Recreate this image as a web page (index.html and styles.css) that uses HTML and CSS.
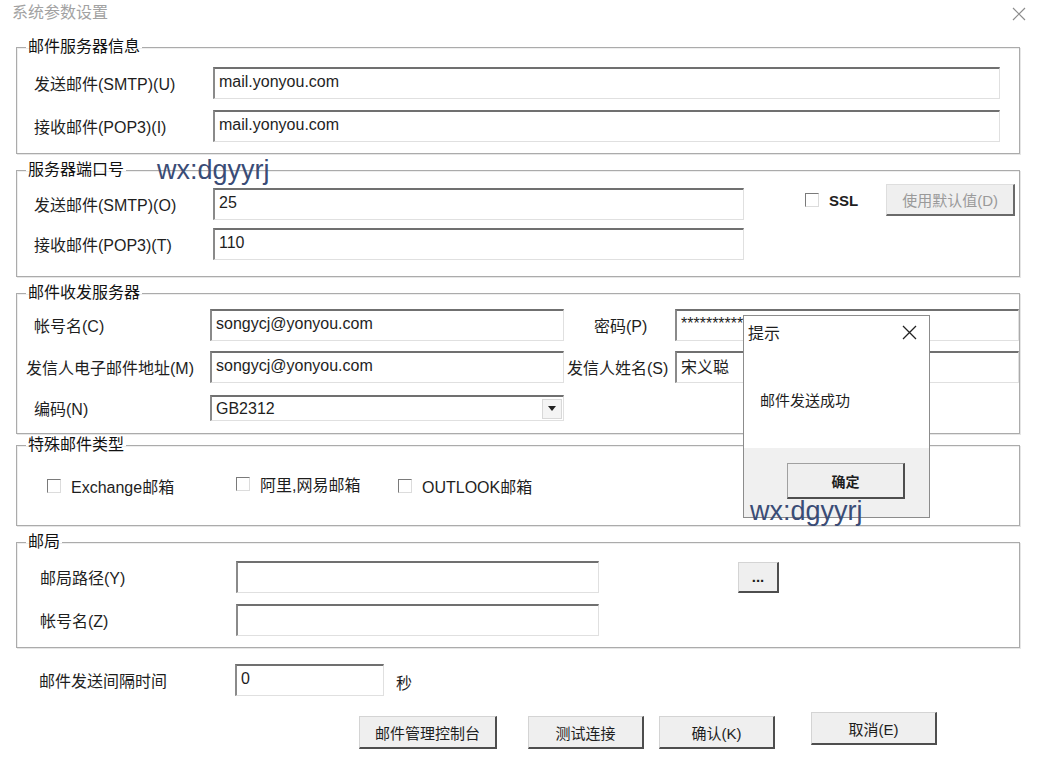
FILE: index.html
```html
<!DOCTYPE html>
<html lang="zh-CN">
<head>
  <meta charset="UTF-8">
  <title>系统参数设置</title>
  <link rel="stylesheet" href="styles.css">
</head>
<body>
<div class="dialog">

  <header class="titlebar">
    <span class="title">系统参数设置</span>
    <svg class="close" width="14" height="14" viewBox="0 0 14 14"><path d="M1 1L13 13M13 1L1 13" stroke="#8c8c8c" stroke-width="1.2" fill="none"/></svg>
  </header>

  <main class="content">

    <fieldset class="group group-server">
      <legend>邮件服务器信息</legend>
      <div class="row">
        <label class="lbl">发送邮件(SMTP)(U)</label>
        <input class="field field-full" type="text" value="mail.yonyou.com">
      </div>
      <div class="row">
        <label class="lbl">接收邮件(POP3)(I)</label>
        <input class="field field-full" type="text" value="mail.yonyou.com">
      </div>
    </fieldset>

    <fieldset class="group group-port">
      <legend>服务器端口号</legend>
      <div class="row">
        <label class="lbl">发送邮件(SMTP)(O)</label>
        <input class="field field-port" type="text" value="25">
        <span class="check check-ssl"><span class="box"></span><b>SSL</b></span>
        <button class="btn btn-default" disabled>使用默认值(D)</button>
      </div>
      <div class="row">
        <label class="lbl">接收邮件(POP3)(T)</label>
        <input class="field field-port" type="text" value="110">
      </div>
    </fieldset>

    <fieldset class="group group-account">
      <legend>邮件收发服务器</legend>
      <div class="row">
        <label class="lbl lbl-acc">帐号名(C)</label>
        <input class="field field-mid" type="text" value="songycj@yonyou.com">
        <label class="lbl-side lbl-pwd">密码(P)</label>
        <input class="field field-side" type="text" value="**********">
      </div>
      <div class="row">
        <label class="lbl lbl-acc lbl-wide">发信人电子邮件地址(M)</label>
        <input class="field field-mid" type="text" value="songycj@yonyou.com">
        <label class="lbl-side">发信人姓名(S)</label>
        <input class="field field-side" type="text" value="宋义聪">
      </div>
      <div class="row row-select">
        <label class="lbl lbl-acc">编码(N)</label>
        <div class="field field-mid select">
          <span>GB2312</span>
          <span class="select-btn"><i></i></span>
        </div>
      </div>
    </fieldset>

    <fieldset class="group group-type">
      <legend>特殊邮件类型</legend>
      <div class="row row-checks">
        <span class="check check-ex"><span class="box"></span>Exchange邮箱</span>
        <span class="check check-ali"><span class="box"></span>阿里,网易邮箱</span>
        <span class="check"><span class="box"></span>OUTLOOK邮箱</span>
      </div>
    </fieldset>

    <fieldset class="group group-post">
      <legend>邮局</legend>
      <div class="row">
        <label class="lbl lbl-post">邮局路径(Y)</label>
        <input class="field field-post" type="text">
        <button class="btn btn-browse">...</button>
      </div>
      <div class="row">
        <label class="lbl lbl-post">帐号名(Z)</label>
        <input class="field field-post" type="text">
      </div>
    </fieldset>

    <div class="row row-interval">
      <label class="lbl lbl-post">邮件发送间隔时间</label>
      <input class="field field-interval" type="text" value="0">
      <span class="unit">秒</span>
    </div>

    <div class="actions">
      <button class="btn btn-console">邮件管理控制台</button>
      <button class="btn btn-test">测试连接</button>
      <button class="btn btn-ok">确认(K)</button>
      <button class="btn btn-cancel">取消(E)</button>
    </div>

  </main>

  <!-- message box shown after a test send -->
  <div class="msgbox">
    <div class="msgbox-title">
      <span>提示</span>
      <svg width="15" height="15" viewBox="0 0 15 15"><path d="M1 1L14 14M14 1L1 14" stroke="#222" stroke-width="1.3" fill="none"/></svg>
    </div>
    <div class="msgbox-text">邮件发送成功</div>
    <div class="msgbox-foot">
      <button class="btn btn-confirm">确定</button>
    </div>
  </div>

  <span class="mark mark-top">wx:dgyyrj</span>
  <span class="mark mark-box">wx:dgyyrj</span>

</div>
</body>
</html>
```

FILE: styles.css
```css
body {
  margin: 0;
  background: #fff;
}
.dialog {
  position: relative;
  width: 1037px;
  height: 757px;
  overflow: hidden;
  background: #fff;
  color: #1e1e1e;
  font: 16px "Liberation Sans", "Noto Sans CJK SC", sans-serif;
}

/* title bar */
.titlebar {
  height: 37px;
  display: flex;
  justify-content: space-between;
  align-items: flex-start;
  padding: 0 12px;
}
.title {
  color: #a2a2a2;
  line-height: 26px;
}
.close {
  margin-top: 7px;
  margin-right: -1px;
}

.content {
  padding: 0 17px 0 16px;
}

/* group boxes */
.group {
  margin: 0;
  padding: 0;
  border: 1px solid #ababab;
  box-shadow: 1px 1px 0 #e6e6e6, inset 1px 1px 0 #eeeeee;
  min-width: 0;
}
.group legend {
  margin-left: 9px;
  padding: 0 2px;
  line-height: 20px;
  color: #111;
}
.group-server { padding: 10px 0 11px; }
.group-port { margin-top: 6px; padding: 8px 0 16px; }
.group-account { margin-top: 6px; padding: 6px 0 12px; }
.group-type { margin-top: 1px; padding: 21px 0 29px; }
.group-post { margin-top: 6px; padding: 9px 0 11px; }

.row {
  display: flex;
  align-items: center;
  padding-left: 17px;
}
.row + .row {
  margin-top: 11px;
}
.group-port .row + .row { margin-top: 8px; }
.group-account .row + .row { margin-top: 10px; }
.group-account .row + .row-select { margin-top: 12px; }

.lbl {
  width: 179px;
  flex: none;
  white-space: nowrap;
}
.lbl-acc { width: 176px; }
.lbl-wide { margin-left: -8px; width: 184px; }
.lbl-post { width: 196px; margin-left: 6px; }
.lbl-side {
  width: 111px;
  flex: none;
  box-sizing: border-box;
  padding-left: 3px;
  white-space: nowrap;
}
.lbl-pwd { padding-left: 30px; }

/* text boxes */
.field {
  box-sizing: border-box;
  height: 32px;
  flex: none;
  margin: 0;
  padding: 0 4px 3px;
  border-style: solid;
  border-width: 2px 1px 1px 2px;
  border-color: #707070 #e0e0e0 #e0e0e0 #8a8a8a;
  background: #fff;
  color: #1e1e1e;
  font: inherit;
  outline: none;
}
.field-full { width: 787px; }
.field-port { width: 531px; }
.field-mid { width: 354px; }
.field-side { width: 344px; }
.field-post { width: 363px; }
.field-interval { width: 149px; }

.select {
  height: 26px;
  display: flex;
  align-items: center;
  justify-content: space-between;
  padding: 0 1px 0 4px;
}
.select-btn {
  width: 20px;
  height: 20px;
  box-sizing: border-box;
  border: 1px solid #d8d8d8;
  background: #f4f4f4;
  display: flex;
  align-items: center;
  justify-content: center;
}
.select-btn i {
  width: 0;
  height: 0;
  border-left: 4px solid transparent;
  border-right: 4px solid transparent;
  border-top: 5px solid #222;
}

/* check boxes */
.check {
  display: flex;
  align-items: center;
  white-space: nowrap;
}
.check .box {
  width: 12px;
  height: 12px;
  margin-right: 10px;
  border-style: solid;
  border-width: 1px;
  border-color: #7a7a7a #dcdcdc #dcdcdc #7a7a7a;
  background: #fff;
}
.check b {
  font-weight: bold;
  font-size: 15px;
}
.check-ssl {
  margin-left: 61px;
  align-self: flex-start;
  margin-top: 2px;
  height: 20px;
}
.row-checks {
  height: 20px;
  padding-left: 30px;
}
.check-ex { width: 189px; }
.check-ali { width: 162px; margin-top: -5px; }

/* push buttons */
.btn {
  box-sizing: border-box;
  height: 33px;
  margin: 0;
  padding: 0;
  flex: none;
  background: #efefef;
  border-style: solid;
  border-width: 1px 2px 2px 1px;
  border-color: #d4d4d4 #4e4e4e #4e4e4e #d4d4d4;
  color: #1e1e1e;
  font: 15px "Liberation Sans", "Noto Sans CJK SC", sans-serif;
}
.btn-default {
  width: 129px;
  height: 32px;
  margin-left: 28px;
  align-self: flex-start;
  margin-top: -4px;
  color: #9a9a9a;
  border-color: #dedede #6a6a6a #6a6a6a #dedede;
}
.btn-browse {
  width: 41px;
  height: 31px;
  margin-left: 139px;
  font-weight: bold;
  line-height: 20px;
}

.row-interval {
  margin-top: 16px;
  padding-left: 17px;
}
.unit {
  margin-left: 12px;
  margin-top: 4px;
}

.actions {
  display: flex;
  align-items: flex-start;
  margin-top: 16px;
}
.actions .btn { margin-top: 4px; }
.btn-console { width: 138px; margin-left: 343px; }
.btn-test { width: 116px; margin-left: 31px; }
.btn-ok { width: 116px; margin-left: 15px; }
.actions .btn-cancel { width: 126px; margin-left: 36px; margin-top: 0; }

/* message box */
.msgbox {
  position: absolute;
  left: 743px;
  top: 315px;
  width: 187px;
  height: 203px;
  box-sizing: border-box;
  border: 1px solid #8c8c8c;
  background: #fff;
  display: flex;
  flex-direction: column;
}
.msgbox-title {
  height: 32px;
  display: flex;
  align-items: center;
  justify-content: space-between;
  padding: 0 12px 0 4px;
}
.msgbox-text {
  flex: 1;
  padding: 43px 0 0 16px;
  font-size: 15px;
  line-height: 20px;
}
.msgbox-foot {
  height: 69px;
  background: #f0f0f0;
  display: flex;
  padding: 15px 0 0 43px;
  box-sizing: border-box;
}
.btn-confirm {
  width: 118px;
  height: 36px;
  font-size: 14px;
  font-weight: bold;
  border-color: #a0a0a0 #4e4e4e #4e4e4e #a0a0a0;
}

/* watermark text */
.mark {
  position: absolute;
  color: #3a4c76;
  font: 27px/30px "Liberation Sans", sans-serif;
}
.mark-top { left: 157px; top: 155px; }
.mark-box { left: 750px; top: 496px; }
```
